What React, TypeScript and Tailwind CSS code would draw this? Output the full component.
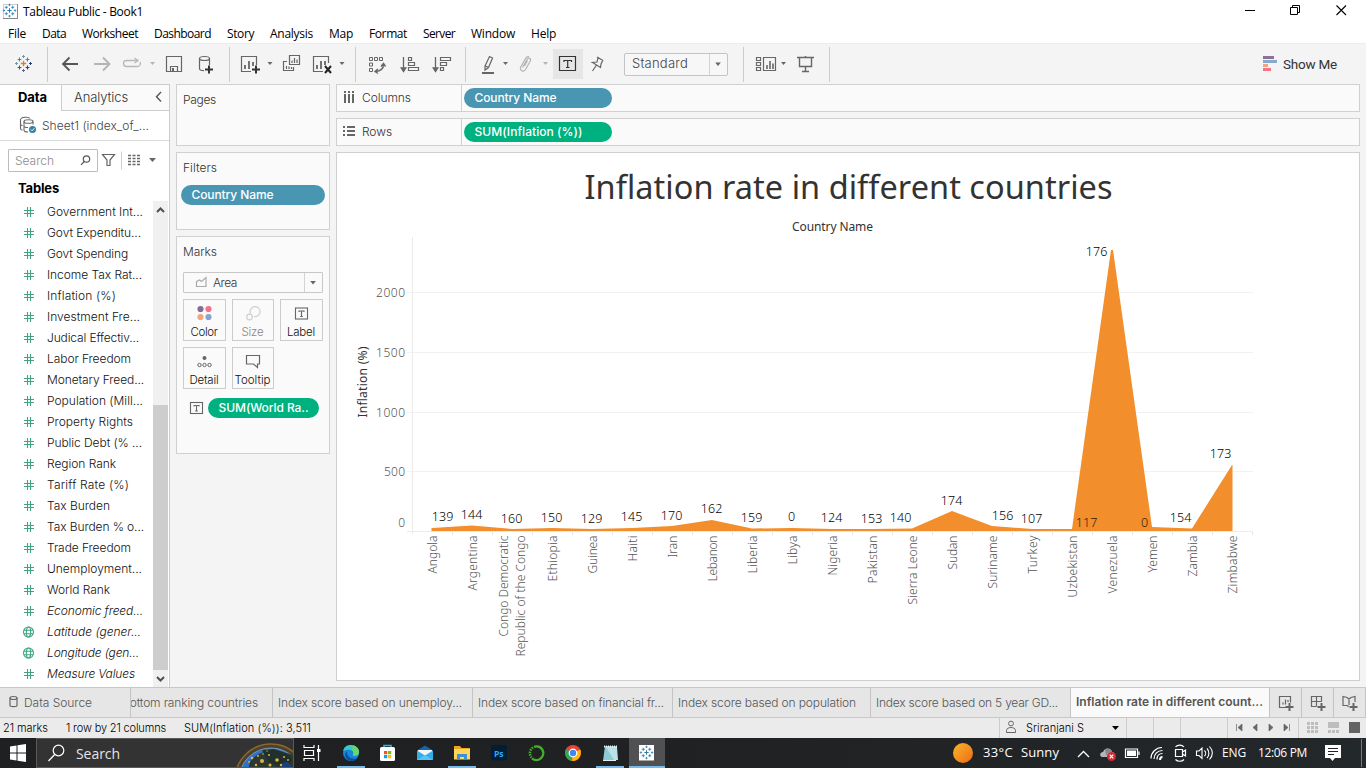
import { useLayoutEffect, useRef, type ReactNode } from "react";

const BENTON = "font-['Inter','Noto_Sans',sans-serif]";
const SEGOE = "font-['Open_Sans','Noto_Sans',sans-serif]";

/** A run of text whose tracking is set so that it fills the given width. */
function T({ w, className = "", children }: { w: number; className?: string; children: string }) {
  const ref = useRef<HTMLSpanElement>(null);
  useLayoutEffect(() => {
    const el = ref.current;
    if (!el) return;
    el.style.letterSpacing = "0px";
    const natural = el.getBoundingClientRect().width;
    el.style.letterSpacing = `${(w - natural) / children.length}px`;
  }, [w, children]);
  return (
    <span ref={ref} className={`inline-block shrink-0 whitespace-pre ${className}`}>
      {children}
    </span>
  );
}

/** Icon drawn in window coordinates. */
function Ico({ x, y, w, h, className = "", children }: { x: number; y: number; w: number; h: number; className?: string; children?: ReactNode }) {
  return (
    <svg width={w} height={h} viewBox={`${x} ${y} ${w} ${h}`} className={`block shrink-0 ${className}`} fill="none">
      {children}
    </svg>
  );
}

const G = "#666666";

function Caret({ x, y = 62, c = G, s = 5 }: { x: number; y?: number; c?: string; s?: number }) {
  return <path d={`M${x} ${y}h${s}l${-s / 2} ${s / 2 + 0.5}z`} fill={c} />;
}

function Spark({ cx, cy, colors, k = 1 }: { cx: number; cy: number; colors: string[]; k?: number }) {
  const plus = (x: number, y: number, r: number, c: string, key: number, sw = 1.2) => (
    <path key={key} d={`M${x - r} ${y}h${2 * r}M${x} ${y - r}v${2 * r}`} stroke={c} strokeWidth={sw} />
  );
  return (
    <g transform={`translate(${cx} ${cy}) scale(${k})`}>
      {plus(0, 0, 2.7, colors[0], 0, 1.3)}
      {plus(-4, -4, 1.9, colors[1], 1, 1.1)}
      {plus(4, -4, 1.9, colors[2], 2, 1.1)}
      {plus(-4, 4, 1.9, colors[3], 3, 1.1)}
      {plus(4, 4, 1.9, colors[4], 4, 1.1)}
      {plus(0, -7, 1.5, colors[5], 5, 1)}
      {plus(0, 7, 1.5, colors[6], 6, 1)}
      {plus(-7, 0, 1.5, colors[5], 7, 1)}
      {plus(7, 0, 1.5, colors[4], 8, 1)}
    </g>
  );
}
const BLUE_SPARK = Array(7).fill("#2f7fae") as string[];

function Plus({ x, y, c = "#333", r = 4 }: { x: number; y: number; c?: string; r?: number }) {
  return <path d={`M${x - r} ${y}h${2 * r}M${x} ${y - r}v${2 * r}`} stroke={c} strokeWidth="2" />;
}

const MENU: [string, number][] = [
  ["File", 18], ["Data", 24], ["Worksheet", 56], ["Dashboard", 57], ["Story", 27], ["Analysis", 43],
  ["Map", 24], ["Format", 38], ["Server", 32], ["Window", 44], ["Help", 25],
];

function Header() {
  return (
    <header className={`${SEGOE} flex h-[43px] shrink-0 flex-col bg-white text-[12px] text-black`}>
      <div className="flex h-6 items-center">
        <Ico x={0} y={0} w={23} h={24}>
          <path d="M3.500 4.500h14v14h-14z" fill="#fff" stroke="#ccc" />
          <path d="M3 18.500h15M17.500 4v15" stroke="#888" />
          <Spark cx={9.500} cy={10.500} colors={BLUE_SPARK} k={0.8} />
        </Ico>
        <T w={120}>Tableau Public - Book1</T>
        <div className="grow" />
        <Ico x={1240} y={0} w={126} h={24}>
          <path d="M1245 10.500h10" stroke="#000" />
          <path d="M1290.500 7.500h7v7h-7zM1292.500 7v-1.500h7v7H1298" stroke="#000" />
          <path d="M1336.500 5.500l9.500 9.500M1346 5.500l-9.500 9.500" stroke="#000" strokeWidth="1.100" />
        </Ico>
      </div>
      <nav className="flex h-[19px] items-center gap-4 pl-2">
        {MENU.map(([t, w]) => <T key={t} w={w}>{t}</T>)}
      </nav>
    </header>
  );
}

function Sep() {
  return <div className="h-[35px] w-px shrink-0 bg-[#cccccc]" />;
}

function Toolbar() {
  return (
    <div className="flex h-[41px] shrink-0 items-center border-t border-[#ececec] bg-[#f4f4f4]">
      <Ico x={0} y={44} w={47} h={40}>
        <Spark cx={23.500} cy={63.500} colors={["#e8762d", "#5b879b", "#5b879b", "#c72035", "#1f457e", "#7199a6", "#5c6692"]} />
      </Ico>
      <Sep />
      <Ico x={48} y={44} w={181} h={40}>
        <path d="M62.500 64H78M69.500 57.500L63 64l6.500 6.500" stroke="#555" strokeWidth="1.800" />
        <path d="M94 64h15.500M103 57.500l6.500 6.500-6.500 6.500" stroke="#b4b4b4" strokeWidth="1.800" />
        <path d="M134 60.500h-7.500a3 3 0 0 0 0 6h11a3 3 0 0 0 2.500-4.500M131 60.500h6M134.500 58L138 60.500l-3.500 2.500" stroke="#b8b8b8" strokeWidth="1.300" />
        <Caret x={150} c="#b4b4b4" />
        <path d="M166.500 56.500h15v15h-15zM170.500 71v-4.500h7V71" stroke={G} strokeWidth="1.200" /><path d="M172 68h2v3h-2z" fill={G} />
        <path d="M199.500 58.500v10c0 1.200 2 2.200 4.500 2.200M209.500 58.500V65" stroke={G} strokeWidth="1.200" />
        <ellipse cx="204.500" cy="58.500" rx="5" ry="2" stroke={G} strokeWidth="1.200" />
        <Plus x={209} y={69.500} />
      </Ico>
      <Sep />
      <Ico x={230} y={44} w={125} h={40}>
        <path d="M251 71.500h-9.500v-15h15V65" stroke={G} strokeWidth="1.200" />
        <path d="M245 69v-4M249 69v-8M253 66v-4" stroke={G} strokeWidth="1.800" />
        <Plus x={256} y={69.500} />
        <Caret x={267.500} />
        <path d="M289.500 55.500h10v9h-10zM287 61.500h-3.500v9h10v-3.500" stroke={G} strokeWidth="1.200" />
        <path d="M292 63v-2.500M294.500 63v-5M297 63v-3.500M286.500 69v-3M289 69v-2.500M291.500 69v-2" stroke={G} strokeWidth="1.200" />
        <path d="M323 71.500h-9.500v-15h15V63" stroke={G} strokeWidth="1.200" />
        <path d="M317 69v-4M321 69v-8M325 65v-4" stroke={G} strokeWidth="1.800" />
        <path d="M325 66l6 7M331 66l-6 7" stroke="#222" strokeWidth="2" />
        <Caret x={339.500} />
      </Ico>
      <Sep />
      <Ico x={356} y={44} w={109} h={40}>
        <path d="M369.500 57.500h3v3h-3zM374.500 57.500h3v3h-3zM379.500 57.500h3v3h-3zM369.500 63h3v3h-3zM369.500 68.500h3v3h-3z" stroke={G} />
        <path d="M383.500 64.500c0 4-3 6.500-8 7M381 66.500l2.500-3 2 3M378 69l-3 2.500 3 2" stroke={G} strokeWidth="1.400" />
        <path d="M403.500 57v13M401.200 68l2.300 3.500 2.300-3.500z" stroke={G} strokeWidth="1.300" fill={G} />
        <path d="M408.500 57.500h3v3h-3zM408.500 62.500h6v3h-6zM408.500 67.500h10v3h-10z" stroke={G} strokeWidth="1.200" />
        <path d="M435.500 57v13M433.200 68l2.300 3.500 2.300-3.500z" stroke={G} strokeWidth="1.300" fill={G} />
        <path d="M440.500 57.500h10v3h-10zM440.500 62.500h6v3h-6zM440.500 67.500h3v3h-3z" stroke={G} strokeWidth="1.200" />
      </Ico>
      <Sep />
      <Ico x={466} y={44} w={87} h={40}>
        <path d="M485 66l4.500-9.500 3 1.500-4 9.500-3.500 2.500zM485.500 66l3 1.500" stroke={G} strokeWidth="1.200" />
        <path d="M482 73h12" stroke={G} strokeWidth="2" />
        <Caret x={503} />
        <path d="M522.500 67.500l4.500-8c1.500-2.500 4.500-1 3.200 1.700l-4.700 8.300c-2 3.200-6.500.8-4.700-2.500l4.700-8.500c.8-1.500 2-2 3.500-1.800M524.500 66l3-5.500" stroke="#b4b4b4" strokeWidth="1.200" />
        <Caret x={543} c="#b4b4b4" />
      </Ico>
      <div className="h-[30px] w-[30px] shrink-0 bg-[#e6e6e6]">
        <Ico x={553} y={49} w={30} h={30}>
          <path d="M559.500 56.500h16v14h-16z" stroke="#333" strokeWidth="1.200" />
          <path d="M564 62v-1.500h7.500V62M567.700 60.500v7M566 67.500h3.500" stroke="#333" strokeWidth="1.200" />
        </Ico>
      </div>
      <Ico x={583} y={44} w={41} h={40}>
        <path d="M597 57l6 3.500M598 57.800l-1 4.200-4.500.5 8 5 .5-3.500 2-4M596.500 65l-4 6M591.500 62.500h2" stroke={G} strokeWidth="1.200" />
      </Ico>
      <div className={`${BENTON} flex h-[23px] w-[104px] shrink-0 items-center rounded-[2px] border border-[#c4c4c4] bg-[#f7f7f7] pl-[7px] text-[13px] font-light text-[#444]`}>
        <T w={56}>Standard</T>
        <div className="grow" />
        <Ico x={709} y={53} w={18} h={21} className="border-l border-[#d4d4d4]"><Caret x={714.500} y={61.500} s={6} /></Ico>
      </div>
      <div className="w-[15px] shrink-0" />
      <Sep />
      <Ico x={744} y={44} w={85} h={40}>
        <path d="M756.500 57.500h4v3h-4zM756.500 62.500h4v3h-4zM756.500 67.500h4v3h-4zM763.500 57.500h12v13h-12z" stroke={G} strokeWidth="1.200" />
        <path d="M767 69v-4M770 69v-8M773 69v-5.500" stroke={G} strokeWidth="1.600" />
        <Caret x={781} />
        <path d="M797 57.500h17M799.500 58v8.500h12V58M805.500 56v1M805.500 67v4.500M802 71.500h7" stroke={G} strokeWidth="1.400" />
      </Ico>
      <Sep />
      <div className="grow" />
      <Ico x={1263} y={44} w={20} h={40}>
        <path d="M1263 56h11v3h-11z" fill="#8b7098" /><path d="M1263 60h14v3h-14z" fill="#86a9d0" />
        <path d="M1263 64h5v3h-5z" fill="#f2a480" /><path d="M1263 68h8v3h-8z" fill="#f77285" />
      </Ico>
      <T w={54} className="font-['Roboto',sans-serif] text-[13.5px] text-[#333]">Show Me</T>
      <div className="w-[29px] shrink-0" />
    </div>
  );
}

const FIELDS: [string, number, ("n" | "i" | "g")][] = [
  ["Government Int...", 96, "n"], ["Govt Expenditu...", 94, "n"], ["Govt Spending", 81, "n"], ["Income Tax Rat...", 95, "n"],
  ["Inflation (%)", 69, "n"], ["Investment Fre...", 93, "n"], ["Judical Effectiv...", 92, "n"], ["Labor Freedom", 84, "n"],
  ["Monetary Freed...", 97, "n"], ["Population (Mill...", 96, "n"], ["Property Rights", 86, "n"], ["Public Debt (% ...", 95, "n"],
  ["Region Rank", 69, "n"], ["Tariff Rate (%)", 82, "n"], ["Tax Burden", 63, "n"], ["Tax Burden % o...", 97, "n"],
  ["Trade Freedom", 84, "n"], ["Unemployment...", 95, "n"], ["World Rank", 63, "n"], ["Economic freed...", 96, "i"],
  ["Latitude (gener...", 94, "g"], ["Longitude (gen...", 92, "g"], ["Measure Values", 88, "i"],
];

function DataPane() {
  return (
    <aside className={`${BENTON} flex h-[603px] w-[170px] shrink-0 flex-col border-t border-r border-[#cccccc] bg-white text-[12px] font-light`}>
      <div className="flex h-[26px] shrink-0 text-[13px]">
        <div className="flex w-[61px] items-center pl-[18px] font-bold text-black"><T w={29}>Data</T></div>
        <div className="flex grow items-center border-b border-l border-[#cccccc] bg-[#fafafa] pl-3 text-[#333]">
          <T w={54}>Analytics</T>
          <div className="grow" />
          <Ico x={153} y={85} w={16} h={25}><path d="M161 92l-4.500 4.800 4.500 4.800" stroke="#555" strokeWidth="1.400" /></Ico>
        </div>
      </div>
      <div className="flex h-[30px] shrink-0 items-center border-b border-[#d9d9d9] text-[#444]">
        <Ico x={0} y={111} w={42} h={29}>
          <path d="M21 119c0-2 8-2.500 9-.5M20.500 119v9.500c0 1 1 1.500 2 1.700M20.500 124c0 1 1 1.500 2 1.700" stroke={G} strokeWidth="1.100" />
          <ellipse cx="28.500" cy="121.500" rx="4.500" ry="1.800" stroke={G} strokeWidth="1.100" />
          <path d="M24 121.500v8.500c0 1 1.500 2 4 2M33 121.500v3M24 126c0 1 1.500 1.500 4 1.500" stroke={G} strokeWidth="1.100" />
          <circle cx="32.500" cy="129.500" r="3.500" fill="#3580a4" /><path d="M30.800 129.500l1.300 1.300 2.200-2.500" stroke="#fff" />
        </Ico>
        <T w={107}>Sheet1 (index_of_...</T>
      </div>
      <div className="flex h-[39px] shrink-0 items-center pl-2">
        <div className="flex h-[23px] w-[90px] items-center rounded-[1px] border border-[#bcbcbc] pl-[6px] text-[#8a8a8a]">
          <T w={39}>Search</T>
          <div className="grow" />
          <Ico x={78} y={150} w={19} h={21}><circle cx="86.500" cy="159" r="3.200" stroke="#555" strokeWidth="1.200" /><path d="M84.300 161.500l-3.300 3.300" stroke="#555" strokeWidth="1.200" /></Ico>
        </div>
        <Ico x={98} y={141} w={71} h={39}>
          <path d="M102.500 154.500h12l-4.500 5.500v5.500h-3V160z" stroke={G} strokeWidth="1.200" />
          <path d="M121.500 151.500v18" stroke="#ccc" />
          <path d="M128 155.500h12M128 158.500h12M128 161.500h12M128 164.500h12" stroke={G} strokeWidth="1.500" strokeDasharray="3 1.500" />
          <Caret x={149} y={158} s={7} />
        </Ico>
      </div>
      <div className="flex h-[21px] shrink-0 items-start pl-[18px] text-[13px] leading-4 font-bold text-black"><T w={41}>Tables</T></div>
      <div className="flex min-h-0 grow">
        <div className="flex w-[153px] flex-col text-[#111]">
          {FIELDS.map(([t, w, k]) => (
            <div key={t} className="flex h-[21px] shrink-0 items-center">
              <svg width="47" height="21" viewBox="0 0 47 21" fill="none" className="shrink-0">
                {k === "g" ? (
                  <g stroke="#3fa57f" strokeWidth="1.100">
                    <circle cx="28.500" cy="11" r="5" /><ellipse cx="28.500" cy="11" rx="2.200" ry="5" /><path d="M24 9.200h9M24 12.800h9" />
                  </g>
                ) : (
                  <path d="M27.500 6v10M30.500 6v10M24 9.500h10M24 12.500h10" stroke="#3fa57f" strokeWidth="1.100" />
                )}
              </svg>
              <T w={w} className={k === "n" ? "" : "italic"}>{t}</T>
            </div>
          ))}
        </div>
        <div className="flex w-[15px] flex-col bg-[#f0f0f0]">
          <Ico x={153} y={202} w={15} h={17}><path d="M157 213l3.500-3.500 3.500 3.500" stroke="#505050" strokeWidth="2" /></Ico>
          <div className="grow" />
          <div className="h-[265px] bg-[#cdcdcd]" />
          <Ico x={153} y={670} w={15} h={17}><path d="M157 677l3.500 3.500 3.500-3.500" stroke="#505050" strokeWidth="2" /></Ico>
        </div>
      </div>
    </aside>
  );
}

function TBox({ x, y }: { x: number; y: number }) {
  return (
    <g stroke={G} strokeWidth="1.100">
      <rect x={x} y={y} width="12" height="11" />
      <path d={`M${x + 3.5} ${y + 4}v-1h5v1M${x + 6} ${y + 3}v5.500M${x + 4.7} ${y + 8.5}h2.600`} />
    </g>
  );
}

function MarkButton({ label, w, bw, dim, children }: { label: string; w: number; bw: string; dim?: boolean; children: ReactNode }) {
  return (
    <div className={`flex h-[42px] ${bw} shrink-0 flex-col items-center border border-[#cccccc] bg-[#fafafa] pr-px ${dim ? "text-[#888]" : "text-[#111]"}`}>
      <svg width="41" height="25" viewBox="0 0 41 25" fill="none" className="shrink-0">{children}</svg>
      <T w={w} className="text-[11.5px] leading-[14px]">{label}</T>
    </div>
  );
}

function Pill({ children, w, cls }: { children: string; w: number; cls: string }) {
  return (
    <div className={`flex h-5 shrink-0 items-center rounded-full pl-[10.5px] text-[12px] font-medium text-white ${cls}`}>
      <T w={w}>{children}</T>
    </div>
  );
}

function Cards() {
  const card = "flex shrink-0 flex-col border border-[#d0d0d0] bg-[#fafafa]";
  return (
    <div className={`${BENTON} flex w-[154px] shrink-0 flex-col gap-[6px] text-[12px] font-light text-[#333]`}>
      <section className={`${card} h-[62px] pt-[7px] pl-[6px]`}><T w={33} className="self-start leading-4">Pages</T></section>
      <section className={`${card} h-[78px] pt-[7px] pl-1`}>
        <T w={34} className="ml-[2px] self-start leading-4">Filters</T>
        <div className="h-[9px]" />
        <Pill w={82} cls="w-[144px] bg-[#4996b2]">Country Name</Pill>
      </section>
      <section className={`${card} h-[218px] pt-[7px] pl-[6px]`}>
        <T w={34} className="self-start leading-4">Marks</T>
        <div className="mt-3 flex h-[21px] w-[140px] items-center rounded-[1px] border border-[#c8c8c8]">
          <Ico x={184} y={273} w={29} h={19}><path d="M196.500 286.500v-5l3-1.500 2 1.500 4.500-4v9z" stroke="#aaa" strokeWidth="1.200" /></Ico>
          <T w={24}>Area</T>
          <div className="grow" />
          <Ico x={304} y={273} w={18} h={19} className="border-l border-[#d4d4d4]"><Caret x={309.500} y={281} s={6} /></Ico>
        </div>
        <div className="mt-[6px] flex gap-[6px]">
          <MarkButton label="Color" w={27} bw="w-[43px]">
            <circle cx="16.500" cy="9" r="3.100" fill="#856e96" /><circle cx="24.500" cy="9" r="3.100" fill="#f77285" />
            <circle cx="16.500" cy="17" r="3.100" fill="#f2a67e" /><circle cx="24.500" cy="17" r="3.100" fill="#85a5cc" />
          </MarkButton>
          <MarkButton label="Size" w={22} bw="w-[42px]" dim>
            <g stroke="#cfcfcf" strokeWidth="1.200"><path d="M18.500 13.500a5 5 0 1 1 3.500 3" /><circle cx="17.500" cy="17" r="2.800" /></g>
          </MarkButton>
          <MarkButton label="Label" w={28} bw="w-[43px]"><TBox x={14.5} y={8} /></MarkButton>
        </div>
        <div className="mt-[6px] flex gap-[6px]">
          <MarkButton label="Detail" w={29} bw="w-[43px]">
            <circle cx="20.500" cy="10" r="2" fill={G} />
            <g stroke={G}><circle cx="15.500" cy="17" r="1.700" /><circle cx="20.500" cy="17" r="1.700" /><circle cx="25.500" cy="17" r="1.700" /></g>
          </MarkButton>
          <MarkButton label="Tooltip" w={36} bw="w-[42px]">
            <path d="M14.500 7.500h13v8.500h-2v3.500l-4-3.500h-7z" stroke={G} strokeWidth="1.200" />
          </MarkButton>
        </div>
        <div className="mt-[9px] flex items-center">
          <Ico x={183} y={398} w={25} h={20}><TBox x={190.500} y={402.500} /></Ico>
          <Pill w={90} cls="w-[111px] bg-[#00b180]">SUM(World Ra..</Pill>
        </div>
      </section>
    </div>
  );
}

const SERIES: { n: string[]; len: number[]; y: number; label: string; lx: number; ly: number }[] = [
  { n: ["Angola"], len: [38], y: 528, label: "139", lx: 442.500, ly: 516 },
  { n: ["Argentina"], len: [55], y: 525.500, label: "144", lx: 471.500, ly: 514 },
  { n: ["Congo Democratic", "Republic of the Congo"], len: [101, 121], y: 529, label: "160", lx: 511.500, ly: 518 },
  { n: ["Ethiopia"], len: [46], y: 528, label: "150", lx: 551.500, ly: 517 },
  { n: ["Guinea"], len: [38], y: 529, label: "129", lx: 591.500, ly: 518 },
  { n: ["Haiti"], len: [26], y: 528, label: "145", lx: 631.500, ly: 516 },
  { n: ["Iran"], len: [22], y: 526, label: "170", lx: 671.500, ly: 515 },
  { n: ["Lebanon"], len: [46], y: 520, label: "162", lx: 711.500, ly: 508 },
  { n: ["Liberia"], len: [38], y: 528.500, label: "159", lx: 751.500, ly: 517 },
  { n: ["Libya"], len: [29], y: 528, label: "0", lx: 791.500, ly: 516 },
  { n: ["Nigeria"], len: [40], y: 529, label: "124", lx: 831.500, ly: 517 },
  { n: ["Pakistan"], len: [48], y: 529, label: "153", lx: 871.500, ly: 518 },
  { n: ["Sierra Leone"], len: [69], y: 528.500, label: "140", lx: 900.500, ly: 517 },
  { n: ["Sudan"], len: [34], y: 511, label: "174", lx: 951.500, ly: 500 },
  { n: ["Suriname"], len: [53], y: 526, label: "156", lx: 1002.500, ly: 515 },
  { n: ["Turkey"], len: [38], y: 529, label: "107", lx: 1031.500, ly: 518 },
  { n: ["Uzbekistan"], len: [62], y: 529, label: "117", lx: 1086.500, ly: 522 },
  { n: ["Venezuela"], len: [58], y: 250, label: "176", lx: 1096.500, ly: 251 },
  { n: ["Yemen"], len: [37], y: 527, label: "0", lx: 1144.500, ly: 522 },
  { n: ["Zambia"], len: [41], y: 528.500, label: "154", lx: 1180.500, ly: 517 },
  { n: ["Zimbabwe"], len: [58], y: 465, label: "173", lx: 1220.500, ly: 453 },
];

function Chart() {
  const px = (i: number) => 432 + 40 * i;
  const area = `M431.500 531V${SERIES[0].y}` + SERIES.map((s, i) => (i === 17 ? `L1111 250H1113` : `L${px(i)} ${s.y}`)).join("") + "H1232.500V531z";
  return (
    <svg width="1022" height="527" viewBox="337 153 1022 527" className="block font-['Noto_Sans',sans-serif]" fill="none">
      <text x="584.500" y="198.500" fontSize="32.500" fill="#333" textLength="528">Inflation rate in different countries</text>
      <text x="792" y="231" fontSize="12" fill="#333" textLength="81">Country Name</text>
      <path d="M407 292.500h846M407 352.500h846M407 412.500h846M407 471.500h846" stroke="#f2f2f2" />
      <path d="M412.500 237v297M407 531.500h846" stroke="#ebebeb" />
      {Array.from({ length: 21 }, (_, i) => <path key={i} d={`M${452.5 + 40 * i} 532v3`} stroke="#e6e6e6" />)}
      {[["2000", 297, 29], ["1500", 357, 29], ["1000", 417, 29], ["500", 476, 21], ["0", 527, 7]].map(([t, y, w]) => (
        <text key={t} x="405" y={y} textAnchor="end" fontSize="12" fontWeight="300" fill="#555" textLength={w}>{t}</text>
      ))}
      <text transform="translate(366.500 417.500) rotate(-90)" fontSize="12" fill="#333" textLength="71">Inflation (%)</text>
      <path d={area} fill="#f28e2b" />
      {SERIES.map((s, i) => (
        <g key={i}>
          <text x={s.lx} y={s.ly + 4.5} textAnchor="middle" fontSize="12.500" fontWeight="300" fill={i === 16 || i === 18 ? "#2d1b08" : "#000"} textLength={s.label.length * 7.2}>{s.label}</text>
          {s.n.map((t, k) => (
            <text key={t} transform={`translate(${s.n.length === 2 ? 508 + 17 * k : px(i) + 4.5} 535.500) rotate(-90)`} textAnchor="end" fontSize="12" fontWeight="300" fill="#555" textLength={s.len[k]}>{t}</text>
          ))}
        </g>
      ))}
    </svg>
  );
}

function Shelf({ label, w, icon, children }: { label: string; w: number; icon: ReactNode; children: ReactNode }) {
  return (
    <div className={`${BENTON} flex h-7 shrink-0 items-center border border-[#d0d0d0] bg-[#fafafa] text-[12px] font-light text-[#333]`}>
      <svg width="25" height="26" viewBox="0 0 25 26" fill="none" className="shrink-0">{icon}</svg>
      <div className="flex h-full w-[100px] shrink-0 items-center border-r border-[#d0d0d0]"><T w={w}>{label}</T></div>
      <div className="w-[2px]" />
      {children}
    </div>
  );
}

function Workspace() {
  return (
    <main className="flex w-[1024px] shrink-0 flex-col gap-[6px]">
      <Shelf label="Columns" w={49} icon={<path d="M8 6v2M8 9v9M12 6v2M12 9v9M16 6v2M16 9v9" stroke={G} strokeWidth="2" />}>
        <Pill w={82} cls="w-[148px] bg-[#4996b2]">Country Name</Pill>
      </Shelf>
      <Shelf label="Rows" w={30} icon={<path d="M6 8h2M10 8h8M6 12h2M10 12h8M6 16h2M10 16h8" stroke={G} strokeWidth="2" />}>
        <Pill w={108} cls="w-[148px] bg-[#00b180]">SUM(Inflation (%))</Pill>
      </Shelf>
      <div className="h-[529px] border border-[#cfcfcf] bg-white"><Chart /></div>
    </main>
  );
}

function SheetTabs() {
  const tab = "flex h-full shrink-0 items-center overflow-hidden border-r border-[#c4c4c4]";
  return (
    <div className={`${BENTON} flex h-[31px] shrink-0 border-t border-b border-[#c8c8c8] bg-[#e6e6e6] text-[12px] font-light text-[#555]`}>
      <div className={`${tab} w-[131px]`}>
        <Ico x={0} y={688} w={24} h={29}>
          <path d="M10 698v7.500c0 1.500 7 1.500 7 0V698" stroke={G} strokeWidth="1.200" /><ellipse cx="13.500" cy="698" rx="3.500" ry="1.500" stroke={G} strokeWidth="1.200" />
        </Ico>
        <T w={68}>Data Source</T>
      </div>
      <div className={`${tab} w-[142px] justify-end pr-[14px]`}><T w={136}>Bottom ranking countries</T></div>
      <div className={`${tab} w-[200px] pl-[5px]`}><T w={184}>Index score based on unemploy...</T></div>
      <div className={`${tab} w-[200px] pl-[5px]`}><T w={186}>Index score based on financial fr...</T></div>
      <div className={`${tab} w-[198px] pl-[5px]`}><T w={178}>Index score based on population</T></div>
      <div className={`${tab} w-[200px] pl-[5px]`}><T w={182}>Index score based on 5 year GD...</T></div>
      <div className={`${tab} w-[199px] bg-[#fafafa] pb-[2px] pl-[5px] font-semibold text-[#555]`}><T w={187}>Inflation rate in different count...</T></div>
      <Ico x={1270} y={688} w={96} h={29}>
        <path d="M1301.500 687v31M1333.500 687v31M1365.500 687v31" stroke="#c4c4c4" />
        <path d="M1286 707.500h-6.500v-11h11v6M1283 704.500v-2M1285.500 704.500v-5M1288 702v-2" stroke={G} strokeWidth="1.200" />
        <Plus x={1289.500} y={707} c={G} />
        <path d="M1316.500 706.500h-5v-10h10v5M1311.500 701.500h10M1316.500 696.500v10" stroke={G} strokeWidth="1.200" />
        <Plus x={1321.500} y={707} c={G} />
        <path d="M1348.500 707l-1-1.500h-4.500v-9l4 1 2 1.500 2-1.500 4-1v5.500M1349 699v6" stroke={G} strokeWidth="1.200" />
        <Plus x={1353.500} y={707} c={G} />
      </Ico>
    </div>
  );
}

function StatusBar() {
  return (
    <div className={`${BENTON} flex h-5 shrink-0 items-center bg-[#ebebeb] text-[11px] font-light text-black`}>
      <div className="w-[3px]" /><T w={45}>21 marks</T>
      <div className="w-[18px]" /><T w={100}>1 row by 21 columns</T>
      <div className="w-[18px]" /><T w={127}>SUM(Inflation (%)): 3,511</T>
      <div className="grow" />
      <Ico x={999} y={718} w={27} h={20}>
        <path d="M999.500 718v20" stroke="#ccc" />
        <circle cx="1011" cy="723.500" r="2.400" stroke={G} /><path d="M1006.500 732.500v-2c0-4 9-4 9 0v2z" stroke={G} />
      </Ico>
      <T w={58}>Sriranjani S</T>
      <Ico x={1084} y={718} w={282} h={20}>
        <Caret x={1112} y={726} s={7} c="#000" />
        <path d="M1126.500 718v20M1153.500 718v20M1180.500 718v20M1227.500 718v20M1298.500 718v20" stroke="#ccc" />
        <path d="M1236.500 724v7M1242 724l-4 3.500 4 3.500zM1257 724l-4 3.500 4 3.500zM1269 724l4 3.500-4 3.500zM1284 724l4 3.500-4 3.500zM1289.500 724v7" stroke="#666" strokeWidth=".7" fill="#666" />
        {[0, 1, 2].map((r) => [0, 1, 2].map((c) => <path key={`${r}${c}`} d={`M${1307 + c * 4} ${722 + r * 4}h3v3h-3z`} fill="#bdbdbd" />))}
        <path d="M1328 722h11v6h-11zM1328 730h3v3h-3zM1332 730h3v3h-3zM1336 730h3v3h-3z" fill="#bdbdbd" />
        <path d="M1349 722h11v11h-11z" fill="#636363" />
      </Ico>
    </div>
  );
}

const LIGHTS: [number, number, number][] = [
  [252, 758, 1.3], [258, 756, 1], [262, 761, 2], [269, 755, 1], [277, 760, 1.8], [284, 757, 1], [270, 765, 1.5], [281, 765, 1.2], [256, 765, 1.2], [288, 760, .9], [267, 751, .7], [249, 762, .9], [263, 754, .8],
];

function Taskbar() {
  return (
    <footer className={`${SEGOE} flex h-[30px] shrink-0 items-center bg-linear-to-r from-[#1f2021] via-[#202122] to-[#23282b] text-[12px] text-white`}>
      <Ico x={0} y={738} w={36} h={30}><path d="M10 746.500l6.500-1v7H10zM17.500 745.300l8.500-1.300v8.500h-8.500zM10 753.500h6.500v7l-6.500-1zM17.500 753.500H26v8.500l-8.500-1.300z" fill="#fff" /></Ico>
      <div className="flex h-[30px] w-[258px] shrink-0 items-center border border-[#5a5a5a] bg-[#333333]">
        <Ico x={37} y={739} w={39} h={28}><circle cx="58.500" cy="750.500" r="5.300" stroke="#fff" strokeWidth="1.200" /><path d="M54.700 754.500L48.500 761" stroke="#fff" strokeWidth="1.300" /></Ico>
        <T w={44} className="text-[14px] text-[#e4e4e4]">Search</T>
        <div className="grow" />
        <Ico x={233} y={739} w={60} h={28}>
          <circle cx="271" cy="780" r="36" fill="#4a4130" /><circle cx="271" cy="780" r="36" stroke="#8a6a28" strokeWidth="1.500" />
          <circle cx="271" cy="780" r="32" fill="#2f71c9" stroke="#7f95a8" />
          <path d="M249 769c-1-7 4-12 10-15 8-4 20-4 34 1v14z" fill="#2a3a30" />
          <path d="M262 750l12-1 9 3 9 6-3 8h-12l-8-4z" fill="#22302c" /><circle cx="286" cy="767" r="5" fill="#1c3f7e" />
          {LIGHTS.map(([x, y, r]) => <circle key={`${x}-${y}`} cx={x} cy={y} r={r} fill="#e3b244" />)}
        </Ico>
      </div>
      <Ico x={294} y={738} w={689} h={30}>
        <path d="M304 745v2.500h10V745M304.500 750.500h9v5h-9zM304 761v-2.500h10v2.500M318.500 745v16" stroke="#fff" strokeWidth="1.200" />
        <path d="M317 749h3.500v3H317z" fill="#fff" />
        <path d="M337 766h28v2h-28zM448 766h28v2h-28zM596 766h28v2h-28z" fill="#76b9ed" />
        <path d="M629 738h36v30h-36z" fill="#505152" /><path d="M629 766h36v2h-36z" fill="#76b9ed" />
        <circle cx="351" cy="753" r="8" fill="#1686d9" />
        <path d="M343.300 751c1-8 13-8 15.500 0 1 4-2.500 5.500-6 4.500 3-4-3-8-9.500-4.500z" fill="#38c9c8" />
        <path d="M353 745.300c4 .8 7 4.500 6 8-1 2.500-4 3-6.500 2 1.500-2 1-4-.5-5.500z" fill="#67d66a" />
        <path d="M347 751.500c-1 5 5 9 10.500 6.500-3 4.500-10 3.500-12-1-1-2.500 0-4.500 1.500-5.500z" fill="#0d4e9d" />
        <path d="M384 748v-2.500h7v2.500" stroke="#32b4e8" strokeWidth="1.500" /><rect x="380" y="747" width="15" height="14" rx="1.500" fill="#fff" />
        <path d="M384 751h3.200v3.200H384z" fill="#f35325" /><path d="M388 751h3.200v3.200H388z" fill="#81bc06" /><path d="M384 755h3.200v3.200H384z" fill="#05a6f0" /><path d="M388 755h3.200v3.200H388z" fill="#ffba08" />
        <path d="M417 750.500l8-5 8 5V760h-16z" fill="#1465ae" /><path d="M418 750h14v6h-14z" fill="#f4f4f4" /><path d="M417 750.500l8 5 8-5V760h-16z" fill="#31aeea" /><path d="M417 760l8-5 8 5z" fill="#56c3f4" />
        <path d="M454 746h6l1.500 2h8.500v11h-16z" fill="#e9a820" /><path d="M454 749h16v10.500h-16z" fill="#ffd65c" /><path d="M457 759.500V754h10v5.500h-3V757h-4v2.500z" fill="#3d91d8" />
        <rect x="491" y="745" width="16" height="15.500" rx="2" fill="#001e36" />
        <text x="494" y="756.500" fontSize="8.500" fontWeight="700" fill="#31a8ff">Ps</text>
        <path d="M534 746.800a6.800 6.800 0 1 1-2 11.500" stroke="#43b02a" strokeWidth="2.400" /><path d="M533 747.500a6.800 6.800 0 0 0-1.500 10" stroke="#43b02a" strokeWidth="2.600" strokeDasharray="1.500 1" />
        <circle cx="573" cy="753" r="8" fill="#ea4335" /><path d="M573 753l-7-4c-2.500 5 .5 11 6 12z" fill="#34a853" /><path d="M573 753l7.300-3.500c2 5-1.300 11.500-8.300 11.500z" fill="#fbbc04" />
        <circle cx="573" cy="753" r="3.800" fill="#4285f4" stroke="#fff" strokeWidth="1.200" />
        <path d="M605 746h12l-1 15h-13z" fill="#8ccbd6" /><path d="M606 747h11l1 13h-4z" fill="#b9e2e8" /><path d="M604 746.500h13" stroke="#e8f4f4" strokeWidth="2" strokeDasharray="1 1" /><path d="M603 760.500h13" stroke="#e8ecec" />
        <path d="M639 745h15v15.500h-15z" fill="#fff" /><Spark cx={646.500} cy={752.500} colors={BLUE_SPARK} k={0.8} />
        <defs><linearGradient id="sun" x1="0" y1="0" x2="1" y2="1"><stop stopColor="#f8b52c" /><stop offset="1" stopColor="#f06b15" /></linearGradient></defs>
        <circle cx="963" cy="753" r="10" fill="url(#sun)" />
      </Ico>
      <T w={30} className="text-[13px]">33°C</T>
      <div className="w-2" />
      <T w={38} className="text-[13px]">Sunny</T>
      <Ico x={1059} y={738} w={163} h={30}>
        <path d="M1078 757l5.500-5.500 5.500 5.500" stroke="#fff" strokeWidth="1.300" />
        <path d="M1102 757c-3-1-2-5 1-5 1-4.500 8-4.500 9 0 3 0 4 4 1 5z" fill="#b6b6b6" /><path d="M1105 749c3-2 7 0 7 3-3 0-5 1-6 4z" fill="#888" />
        <circle cx="1111.500" cy="756.500" r="4.500" fill="#d02b35" /><path d="M1109.700 754.700l3.600 3.600M1113.300 754.700l-3.600 3.600" stroke="#fff" strokeWidth="1.200" />
        <path d="M1125.500 749h12v8.500h-12zM1139 751.500v3.500" stroke="#fff" strokeWidth="1.200" /><path d="M1127 750.500h9v5.500h-9z" fill="#fff" />
        <g stroke="#aaa" strokeWidth="1.200"><path d="M1151 758.500c0-6 5-11 11-11M1154 759c0-5 3.500-8.500 8.500-8.500M1157 759.500c0-3.500 2-6 5.500-6" stroke="#fff" /><path d="M1160 760c0-2 1-3 2.500-3" stroke="#fff" strokeWidth="2" /></g>
        <path d="M1175.500 749.500h7v7h-7zM1182.500 752l3-2v6l-3-2M1175.500 747c2-2.500 6.500-2.500 8.500 0M1175.500 759.500c2 2.300 6.500 2.300 8.500 0" stroke="#fff" strokeWidth="1.200" />
        <path d="M1196.500 751v4.500h2.500l3 3v-10.500l-3 3zM1204.500 750.500c1.500 1.500 1.500 4 0 5.500M1207 748.500c2.500 2.500 2.500 7 0 9.500M1209.500 746.500c3.500 4 3.500 9 0 13" stroke="#fff" strokeWidth="1.100" />
      </Ico>
      <T w={24}>ENG</T>
      <div className="w-3" />
      <T w={49}>12:06 PM</T>
      <Ico x={1307} y={738} w={59} h={30}>
        <path d="M1325 745h16v13h-6l-2.500 3-2.500-3h-5z" fill="#fff" /><path d="M1328 748.500h10M1328 751.500h10M1328 754.500h6" stroke="#222" />
        <path d="M1361.500 739v28" stroke="#777" />
      </Ico>
    </footer>
  );
}

export default function App() {
  return (
    <div className="flex h-[768px] w-[1366px] flex-col overflow-hidden bg-[#f4f4f4]">
      <Header />
      <Toolbar />
      <div className="flex h-[603px] shrink-0 gap-[6px]">
        <DataPane />
        <Cards />
        <Workspace />
      </div>
      <SheetTabs />
      <StatusBar />
      <Taskbar />
    </div>
  );
}
